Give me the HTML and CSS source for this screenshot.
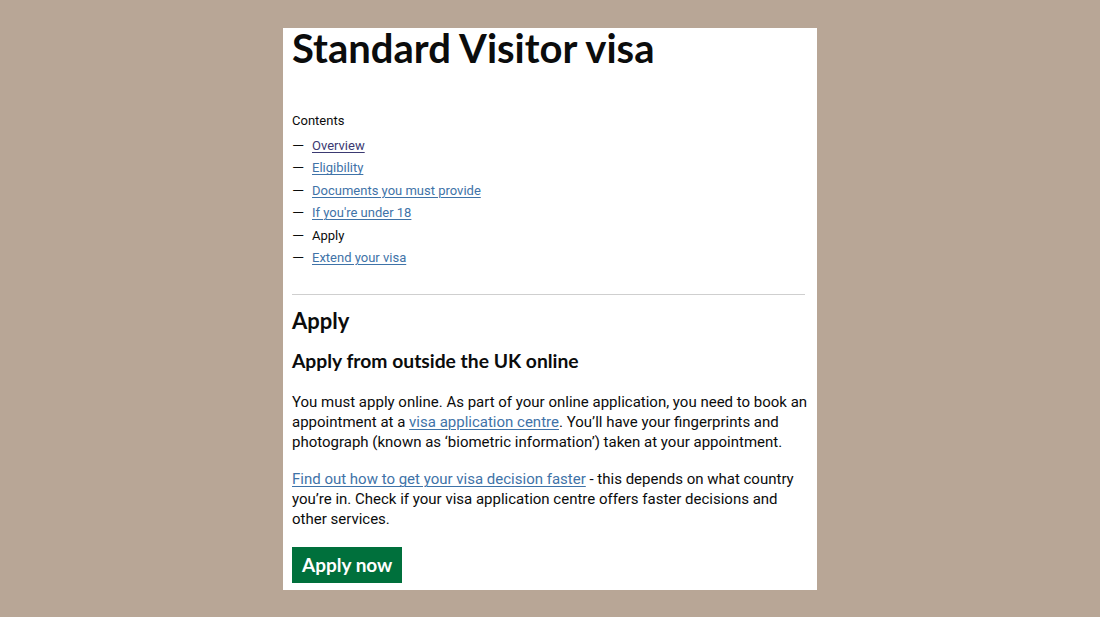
FILE: index.html
```html
<!DOCTYPE html>
<html lang="en">
<head>
<meta charset="utf-8">
<title>Standard Visitor visa</title>
<link rel="stylesheet" href="styles.css">
</head>
<body>
<main class="card">
  <h1 class="title">Standard Visitor visa</h1>
  <nav class="contents">
    <h2 class="contents-title">Contents</h2>
    <ul class="contents-list">
      <li><span class="dash">—</span><a class="link visited" href="#">Overview</a></li>
      <li><span class="dash">—</span><a class="link" href="#">Eligibility</a></li>
      <li><span class="dash">—</span><a class="link" href="#">Documents you must provide</a></li>
      <li><span class="dash">—</span><a class="link" href="#">If you're under 18</a></li>
      <li><span class="dash">—</span><span class="current">Apply</span></li>
      <li><span class="dash">—</span><a class="link" href="#">Extend your visa</a></li>
    </ul>
  </nav>
  <hr class="rule">
  <h2 class="section-title">Apply</h2>
  <h3 class="sub-title">Apply from outside the UK online</h3>
  <p class="body">You must apply online. As part of your online application, you need to book an appointment at a <a class="link" href="#">visa application centre</a>. You’ll have your fingerprints and photograph (known as ‘biometric information’) taken at your appointment.</p>
  <p class="body"><a class="link" href="#">Find out how to get your visa decision faster</a> - this depends on what country you’re in. Check if your visa application centre offers faster decisions and other services.</p>
  <a class="button" href="#">Apply now</a>
</main>
</body>
</html>
```
FILE: styles.css
```css
html, body {
  margin: 0;
  padding: 0;
}
body {
  background: #b8a696;
  height: 617px;
  font-family: "Roboto", "Liberation Sans", sans-serif;
  color: #0b0c0c;
}
.card {
  box-sizing: border-box;
  width: 534px;
  height: 562px;
  margin: 28px auto 0;
  background: #ffffff;
  padding: 0 8px 0 9px;
}
.title,
.section-title,
.sub-title,
.button {
  font-family: "Lato", "Liberation Sans", sans-serif;
}
.title {
  margin: 0;
  font-weight: 700;
  font-size: 40px;
  line-height: 40px;
}
.contents {
  margin-top: 43px;
}
.contents-title {
  margin: 0 0 4px;
  font-size: 13px;
  font-weight: 400;
  line-height: 20px;
}
.contents-list {
  list-style: none;
  margin: 0;
  padding: 0;
}
.contents-list li {
  display: flex;
  font-size: 13px;
  line-height: 22.4px;
}
.dash {
  width: 20px;
  flex: none;
  transform: scaleX(1.2);
  transform-origin: left center;
}
.link {
  color: #3f73a8;
  text-decoration: underline;
  text-underline-offset: 2px;
  text-decoration-thickness: 1px;
}
.link.visited {
  color: #3b3a72;
}
.current {
  color: #0b0c0c;
}
.rule {
  margin: 25px 4px 0 0;
  border: 0;
  border-top: 1px solid #cfcfcf;
}
.section-title {
  margin: 13px 0 0;
  font-size: 22px;
  font-weight: 700;
  line-height: 26px;
}
.sub-title {
  margin: 15px 0 0;
  font-size: 19.3px;
  font-weight: 700;
  line-height: 24px;
}
.body {
  margin: 19px 0 0;
  font-size: 15px;
  line-height: 20px;
}
.body + .body {
  margin-top: 17px;
}
.button {
  display: inline-block;
  margin-top: 18px;
  background: #00703c;
  color: #ffffff;
  text-decoration: none;
  font-weight: 700;
  font-size: 19px;
  line-height: 36px;
  padding: 0 10px;
}
```
